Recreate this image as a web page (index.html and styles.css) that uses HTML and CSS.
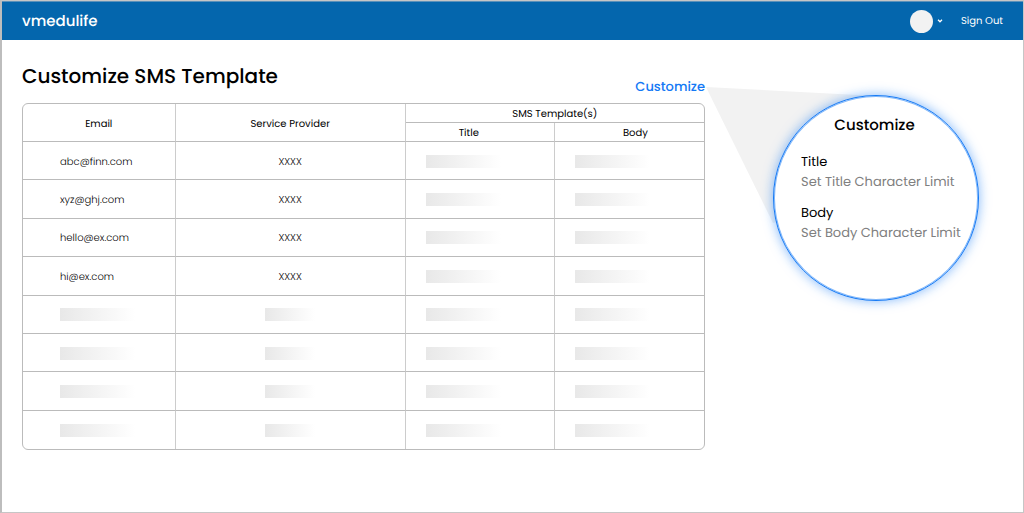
FILE: index.html
```html
<!DOCTYPE html>
<html lang="en">
<head>
<meta charset="utf-8">
<meta name="viewport" content="width=device-width, initial-scale=1">
<title>Customize SMS Template</title>
<link rel="stylesheet" href="styles.css">
</head>
<body>
<div class="page">
  <header class="topbar">
    <a class="brand" href="#">vmedulife</a>
    <nav class="account">
      <button class="profile" type="button" aria-label="Account menu">
        <span class="avatar"></span>
        <svg class="chevron" viewBox="0 0 6 4" aria-hidden="true"><path d="M1 .8 3 2.8 5 .8"/></svg>
      </button>
      <a class="signout" href="#">Sign Out</a>
    </nav>
  </header>
  <main class="content">
    <section class="templates">
      <div class="heading">
        <h1 class="title">Customize SMS Template</h1>
        <button class="customize" type="button">Customize</button>
      </div>
      <table class="grid">
        <colgroup><col class="col-email"><col class="col-provider"><col class="col-text"><col class="col-text"></colgroup>
        <thead>
          <tr><th rowspan="2">Email</th><th rowspan="2">Service Provider</th><th colspan="2">SMS Template(s)</th></tr>
          <tr><th class="head-title">Title</th><th class="head-body">Body</th></tr>
        </thead>
        <tbody>
          <tr><td class="email">abc@finn.com</td><td class="provider">XXXX</td><td><span class="bar"></span></td><td><span class="bar"></span></td></tr>
          <tr><td class="email">xyz@ghj.com</td><td class="provider">XXXX</td><td><span class="bar"></span></td><td><span class="bar"></span></td></tr>
          <tr><td class="email">hello@ex.com</td><td class="provider">XXXX</td><td><span class="bar"></span></td><td><span class="bar"></span></td></tr>
          <tr><td class="email">hi@ex.com</td><td class="provider">XXXX</td><td><span class="bar"></span></td><td><span class="bar"></span></td></tr>
          <tr><td class="email"><span class="bar"></span></td><td class="provider"><span class="bar short"></span></td><td><span class="bar"></span></td><td><span class="bar"></span></td></tr>
          <tr><td class="email"><span class="bar"></span></td><td class="provider"><span class="bar short"></span></td><td><span class="bar"></span></td><td><span class="bar"></span></td></tr>
          <tr><td class="email"><span class="bar"></span></td><td class="provider"><span class="bar short"></span></td><td><span class="bar"></span></td><td><span class="bar"></span></td></tr>
          <tr><td class="email"><span class="bar"></span></td><td class="provider"><span class="bar short"></span></td><td><span class="bar"></span></td><td><span class="bar"></span></td></tr>
        </tbody>
      </table>
    </section>
    <aside class="callout">
      <svg class="beam" viewBox="0 0 274 214" aria-hidden="true"><path d="M0 0 171 9 171 111 67 136Z"/></svg>
      <div class="lens">
        <h2 class="lens-title">Customize</h2>
        <div class="field">
          <label for="title-limit">Title</label>
          <input id="title-limit" type="text" placeholder="Set Title Character Limit">
        </div>
        <div class="field">
          <label for="body-limit">Body</label>
          <input id="body-limit" type="text" placeholder="Set Body Character Limit">
        </div>
      </div>
    </aside>
  </main>
</div>
</body>
</html>
```

FILE: styles.css
```css
* { box-sizing: border-box; }

body {
  margin: 0;
  background: #fff;
  color: #000;
  font-family: Poppins, Inter, "Liberation Sans", sans-serif;
  text-rendering: geometricPrecision;
}

button,
input {
  text-rendering: inherit;
}

button {
  padding: 0;
  border: 0;
  background: none;
  font: inherit;
  cursor: pointer;
}

.page {
  min-height: 100vh;
  border: 1px solid #c6c6c6;
  border-left: 2px solid #bdbdbd;
}

.topbar {
  display: flex;
  align-items: center;
  justify-content: space-between;
  height: 39px;
  padding: 0 20px;
  background: #0466ad;
  border-top: 1px solid #5b91ba;
  color: #fff;
}

.brand {
  color: #fff;
  font-size: 15px;
  font-weight: 500;
  line-height: 23px;
  text-decoration: none;
}

.account {
  display: flex;
  align-items: center;
  gap: 18px;
}

.profile {
  display: flex;
  align-items: center;
  gap: 4px;
}

.avatar {
  width: 23px;
  height: 23px;
  border-radius: 50%;
  background: #f2f2f2;
}

.chevron {
  width: 6px;
  height: 4px;
  fill: none;
  stroke: #fff;
  stroke-width: 1.3;
}

.signout {
  color: #fff;
  font-size: 10px;
  text-decoration: none;
}

.content {
  display: grid;
  grid-template-columns: minmax(0, 683fr) minmax(274px, 298fr);
  padding: 20px 20px 62px;
}

.heading {
  display: flex;
  align-items: flex-start;
  justify-content: space-between;
  height: 43px;
}

.title {
  margin: 0;
  font-size: 20px;
  font-weight: 500;
  line-height: 32px;
}

.customize {
  margin-top: 17px;
  color: #1479f5;
  font-size: 13px;
  font-weight: 500;
  line-height: 20px;
}

.grid {
  width: 100%;
  height: 347px;
  table-layout: fixed;
  border: 1px solid #bbb;
  border-radius: 6px;
  border-spacing: 0;
  font-size: 10px;
  line-height: 15px;
}

.col-email { width: 22.4%; }
.col-provider { width: 33.8%; }
.col-text { width: 21.9%; }

.grid th,
.grid td {
  padding: 1px 0 0;
  border-right: 1px solid #ccc;
  border-bottom: 1px solid #bbb;
}

.grid th {
  height: 19px;
  font-weight: 400;
}

.grid td {
  height: 38px;
  padding-left: 20px;
  font-weight: 300;
}

.grid tr > :last-child { border-right: 0; }
.grid tbody tr:last-child td { border-bottom: 0; }

.grid .head-title { padding-right: 22px; }
.grid .head-body { padding-left: 12px; }
.grid .email { padding-left: 37px; }

.grid .provider {
  padding-left: 0;
  text-align: center;
}

.bar {
  display: block;
  width: 75px;
  height: 13px;
  background: linear-gradient(90deg, #e8e8e8, #fff);
}

.short {
  width: 50px;
  margin: 0 auto;
}

.callout {
  position: relative;
  width: 274px;
  padding: 8px 0 0 68px;
  margin-top: 27px;
}

.beam {
  position: absolute;
  top: 0;
  left: 1px;
  width: 274px;
  height: 214px;
  fill: #f2f2f2;
}

.lens {
  position: relative;
  height: 206px;
  padding: 20px 12px 0 27px;
  border: 1px solid #1479f5;
  border-radius: 50%;
  background: #fff;
  box-shadow: 0 0 12px #1479f588, inset 0 0 0 1px #1479f588;
}

.lens-title {
  margin: 0 0 16px -18px;
  font-size: 15px;
  font-weight: 500;
  line-height: 20px;
  text-align: center;
}

.field {
  display: flex;
  flex-direction: column;
  margin-bottom: 11px;
  font-size: 13px;
  line-height: 20px;
}

.field input {
  width: 100%;
  height: 20px;
  padding: 0;
  border: 0;
  background: none;
  font: inherit;
}

.field input::placeholder {
  color: #808080;
  opacity: 1;
}
```
